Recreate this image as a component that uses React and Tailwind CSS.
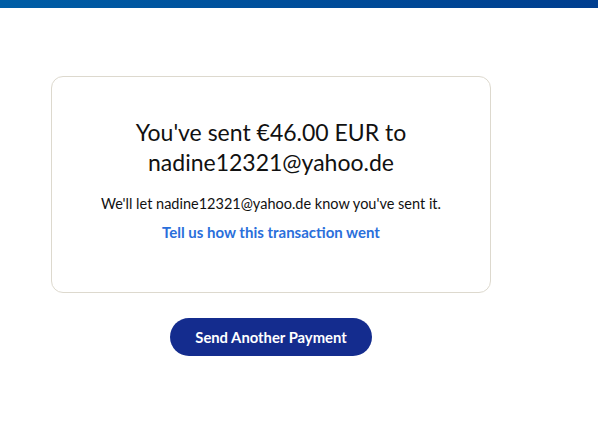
import React from 'react';

export default function App() {
  return (
    <div className="min-h-[444px] bg-white" style={{ fontFamily: 'Lato, "Open Sans", sans-serif' }}>
      {/* Top bar */}
      <div className="h-2 bg-gradient-to-r from-[#005ea6] to-[#003e8f]" />

      <div className="w-[440px] ml-[51px] pt-[68px]">
        {/* Card */}
        <div className="h-[217px] border border-[#ddd9ce] rounded-xl flex flex-col items-center pt-[40px] text-center">
          <h1 className="text-[23px] leading-[30px] text-[#111] font-normal">
            You've sent €46.00 EUR to
            <br />
            nadine12321@yahoo.de
          </h1>
          <p className="mt-[17px] text-[14.5px] leading-5 text-[#111]">
            We'll let nadine12321@yahoo.de know you've sent it.
          </p>
          <a href="#" className="mt-[8px] text-[15px] leading-5 font-bold text-[#2a6fdb]">
            Tell us how this transaction went
          </a>
        </div>

        {/* Button */}
        <div className="flex justify-center mt-[25px]">
          <button className="w-[202px] h-[38px] rounded-full bg-[#142c8e] text-white text-[14.8px] font-bold">
            Send Another Payment
          </button>
        </div>
      </div>
    </div>
  );
}
